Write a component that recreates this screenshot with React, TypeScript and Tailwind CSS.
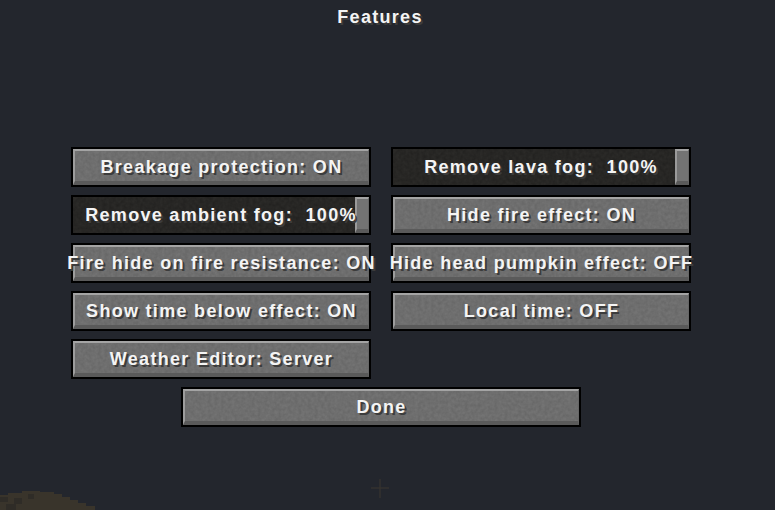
const font = "font-['Liberation_Sans','DejaVu_Sans',sans-serif]";

function Noise({ id, opacity }: { id: string; opacity: string }) {
  return (
    <svg className={`absolute inset-0 h-full w-full ${opacity}`}>
      <filter id={id}>
        <feTurbulence type="fractalNoise" baseFrequency="0.3" numOctaves="2" seed="4" />
        <feColorMatrix values="0 0 0 0 0  0 0 0 0 0  0 0 0 0 0  0 0 0 1.6 -0.4" />
      </filter>
      <rect width="100%" height="100%" filter={`url(#${id})`} />
    </svg>
  );
}

function Label({ children, className = '' }: { children: string; className?: string }) {
  return (
    <span
      className={`relative whitespace-pre text-[18px] font-bold leading-none tracking-[1.3px] text-[#f4f4f4] [text-shadow:2px_2px_0_#3c3c3c] ${className}`}
    >
      {children}
    </span>
  );
}

function Button({ label, wide }: { label: string; wide?: boolean }) {
  return (
    <div className={`flex h-10 justify-center border-2 border-black bg-[#737373] ${wide ? 'w-[400px]' : 'w-[300px]'}`}>
      <div className="relative flex w-full items-center justify-center border-t-2 border-l-2 border-r border-b-4 border-t-[#a4a4a4] border-l-[#9c9c9c] border-r-[#666666] border-b-[#5a5a5a]">
        <Noise id={`n-${label.length}`} opacity="opacity-10" />
        <Label className="mt-[2px]">{label}</Label>
      </div>
    </div>
  );
}

function Slider({ label }: { label: string }) {
  return (
    <div className="relative flex h-10 w-[300px] items-center justify-center border-2 border-black bg-[#2b2a28]">
      <Noise id={`s-${label.length}`} opacity="opacity-20" />
      <div className="absolute inset-y-0 right-0 w-[14px] border-t-2 border-l-2 border-r border-b-4 border-t-[#a4a4a4] border-l-[#9a9a9a] border-r-[#666666] border-b-[#5a5a5a] bg-[#737373]" />
      <Label>{label}</Label>
    </div>
  );
}

export default function App() {
  return (
    <div className={`relative h-[510px] w-[775px] overflow-hidden bg-[#23262d] ${font}`}>
      {/* world showing through behind the menu */}
      <svg className="absolute inset-0 h-full w-full" viewBox="0 0 775 510">
        <path d="M0 495h8v-2h14v-2h18v1h14v2h8v3h8v3h8v3h8v3h9v6H0Z" fill="#39342b" />
        <path d="M0 497h8v5H0zM14 498h8v6h-8zM28 494h6v5h-6zM6 504h10v6H6z" fill="#2f2c27" />
        <path d="M380 479v19M371 488h18" stroke="#35322f" strokeWidth="1.5" />
      </svg>

      <div className="relative flex h-full flex-col">
        <div className="flex h-[147px] justify-center pt-2 pr-[15px]">
          <Label>Features</Label>
        </div>
        <div className="grid grid-cols-[300px_300px] gap-x-5 gap-y-2 pl-[71px]">
          <Button label="Breakage protection: ON" />
          <Slider label="Remove lava fog:  100%" />
          <Slider label="Remove ambient fog:  100%" />
          <Button label="Hide fire effect: ON" />
          <Button label="Fire hide on fire resistance: ON" />
          <Button label="Hide head pumpkin effect: OFF" />
          <Button label="Show time below effect: ON" />
          <Button label="Local time: OFF" />
          <Button label="Weather Editor: Server" />
        </div>
        <div className="mt-2 pl-[181px]">
          <Button label="Done" wide />
        </div>
      </div>
    </div>
  );
}
